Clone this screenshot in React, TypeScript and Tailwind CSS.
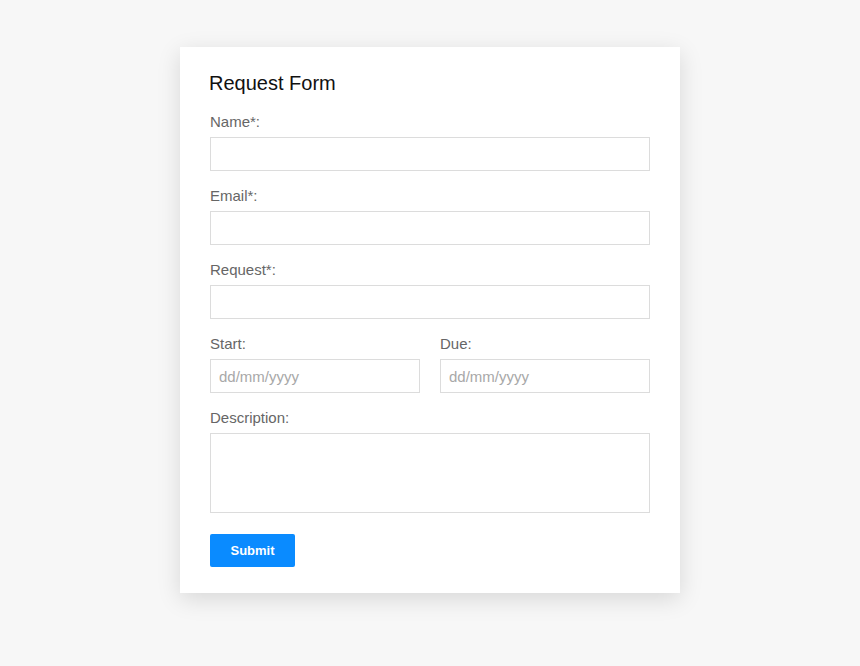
import React from "react";

const font = { fontFamily: '"Liberation Sans", Arial, Helvetica, sans-serif' };

function Label({ children }: { children: React.ReactNode }) {
  return <label className="block text-[15px] leading-[20px] text-[#666] mb-[5px]">{children}</label>;
}

const inputCls =
  "block w-full h-[34px] border border-[#dcdcdc] bg-white px-[8px] text-[15px] text-[#333] outline-none placeholder:text-[#a8a8a8]";

export default function App() {
  return (
    <div className="min-h-[666px] w-full bg-[#f7f7f7] flex justify-center pt-[47px]" style={font}>
      <div className="w-[500px] h-[546px] bg-white shadow-[0_6px_22px_rgba(0,0,0,0.13)] px-[30px] pt-[22px]">
        <h1 className="text-[20px] leading-[28px] text-[#111] -ml-[1px] mb-[15px]">Request Form</h1>
        <div className="mb-[15px]">
          <Label>Name*:</Label>
          <input className={inputCls} type="text" />
        </div>
        <div className="mb-[15px]">
          <Label>Email*:</Label>
          <input className={inputCls} type="text" />
        </div>
        <div className="mb-[15px]">
          <Label>Request*:</Label>
          <input className={inputCls} type="text" />
        </div>
        <div className="mb-[15px] grid grid-cols-2 gap-x-[20px]">
          <div>
            <Label>Start:</Label>
            <input className={inputCls} type="text" placeholder="dd/mm/yyyy" />
          </div>
          <div>
            <Label>Due:</Label>
            <input className={inputCls} type="text" placeholder="dd/mm/yyyy" />
          </div>
        </div>
        <div className="mb-[21px]">
          <Label>Description:</Label>
          <textarea className="block w-full h-[80px] border border-[#dcdcdc] bg-white p-[8px] text-[15px] outline-none resize-none" />
        </div>
        <button className="w-[85px] h-[33px] bg-[#0a8bff] rounded-[2px] text-white text-[13px] font-bold">Submit</button>
      </div>
    </div>
  );
}
